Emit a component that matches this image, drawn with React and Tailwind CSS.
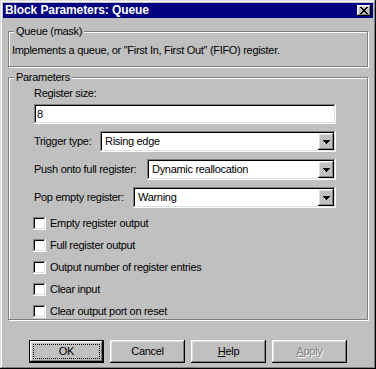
import React from 'react';

const raised = 'shadow-[inset_-1px_-1px_#000,inset_1px_1px_#fff,inset_-2px_-2px_#808080,inset_2px_2px_#dfdfdf]';
const sunken = 'shadow-[inset_-1px_-1px_#fff,inset_1px_1px_#808080,inset_-2px_-2px_#dfdfdf,inset_2px_2px_#000]';
const etched = 'border border-[#808080] shadow-[1px_1px_0_#fff,inset_1px_1px_0_#fff]';

const CloseGlyph = () => (
  <svg width="8" height="7" viewBox="0 0 8 7" shapeRendering="crispEdges">
    <path
      fill="#000"
      d="M0 0h2v1H0zM6 0h2v1H6zM1 1h2v1H1zM5 1h2v1H5zM2 2h4v1H2zM3 3h2v1H3zM2 4h4v1H2zM1 5h2v1H1zM5 5h2v1H5zM0 6h2v1H0zM6 6h2v1H6z"
    />
  </svg>
);

const ArrowGlyph = () => (
  <svg width="7" height="4" viewBox="0 0 7 4" shapeRendering="crispEdges">
    <path fill="#000" d="M0 0h7v1H0zM1 1h5v1H1zM2 2h3v1H2zM3 3h1v1H3z" />
  </svg>
);

const Dropdown = ({ value, width }) => (
  <div className={`flex h-[21px] items-center bg-white p-[2px] ${sunken} ${width}`}>
    <span className="flex-1 pl-[3px] leading-[13px]">{value}</span>
    <span className={`flex h-[17px] w-[16px] items-center justify-center bg-[#c0c0c0] ${raised}`}>
      <ArrowGlyph />
    </span>
  </div>
);

const Checkbox = ({ label }) => (
  <div className="ml-[-1px] mt-[9px] flex h-[13px] items-center gap-[4px]">
    <span className={`h-[13px] w-[13px] shrink-0 bg-white ${sunken}`} />
    <span className="leading-[13px]">{label}</span>
  </div>
);

const DialogButton = ({ children, isDefault, disabled }) => (
  <button
    className={`flex h-[23px] w-[75px] items-center justify-center bg-[#c0c0c0] ${raised} ${
      isDefault ? 'border border-black' : ''
    } ${disabled ? 'text-[#808080] [text-shadow:1px_1px_0_#fff]' : 'text-black'}`}
  >
    {isDefault ? (
      <span className="flex h-[15px] w-[67px] items-center justify-center border border-dotted border-black leading-[13px]">
        {children}
      </span>
    ) : (
      <span className="leading-[13px]">{children}</span>
    )}
  </button>
);

const App = () => {
  const checks = [
    'Empty register output',
    'Full register output',
    'Output number of register entries',
    'Clear input',
    'Clear output port on reset'
  ];

  return (
    <div className="h-[369px] w-[376px] overflow-hidden bg-white">
      <div
        className={`flex h-[369px] w-[376px] flex-col bg-[#c0c0c0] p-[3px] font-['Liberation_Sans',Arial,sans-serif] text-[11px] tracking-[-0.3px] text-black shadow-[inset_-1px_-1px_#000,inset_1px_1px_#dfdfdf,inset_-2px_-2px_#808080,inset_2px_2px_#fff]`}
      >
        {/* title bar */}
        <div className="flex h-[15px] items-center justify-between bg-[#000080] pl-[2px] pr-[2px]">
          <span className="text-[12px] font-bold leading-[15px] tracking-[-0.1px] text-white">
            Block Parameters: Queue
          </span>
          <span className={`flex h-[11px] w-[14px] items-center justify-center bg-[#c0c0c0] ${raised}`}>
            <CloseGlyph />
          </span>
        </div>

        <div className="flex flex-col px-[5px]">
          {/* mask description */}
          <div className={`relative mt-[13px] h-[36px] pl-[3px] pt-[12px] ${etched}`}>
            <span className="absolute left-[5px] top-[-7px] bg-[#c0c0c0] px-[2px] leading-[13px]">
              Queue (mask)
            </span>
            <p className="leading-[13px]">
              Implements a queue, or "First In, First Out" (FIFO) register.
            </p>
          </div>

          {/* parameters */}
          <div className={`relative mt-[10px] flex flex-col pb-[1px] pl-[25px] pr-[31px] pt-[9px] ${etched}`}>
            <span className="absolute left-[5px] top-[-7px] bg-[#c0c0c0] px-[2px] leading-[13px]">
              Parameters
            </span>

            <div className="h-[13px] leading-[13px]">Register size:</div>
            <div className={`mt-[4px] flex h-[20px] items-center bg-white pl-[3px] ${sunken}`}>
              <span className="leading-[13px]">8</span>
            </div>

            <div className="mt-[7px] flex items-center justify-between">
              <span className="leading-[13px]">Trigger type:</span>
              <Dropdown value="Rising edge" width="w-[236px]" />
            </div>
            <div className="mt-[7px] flex items-center justify-between">
              <span className="leading-[13px]">Push onto full register:</span>
              <Dropdown value="Dynamic reallocation" width="w-[189px]" />
            </div>
            <div className="mt-[7px] flex items-center justify-between">
              <span className="leading-[13px]">Pop empty register:</span>
              <Dropdown value="Warning" width="w-[203px]" />
            </div>

            {checks.map((label) => (
              <Checkbox key={label} label={label} />
            ))}
          </div>

          {/* buttons */}
          <div className="mt-[20px] flex justify-center gap-[6px]">
            <DialogButton isDefault>OK</DialogButton>
            <DialogButton>Cancel</DialogButton>
            <DialogButton>
              <u className="underline-offset-[1px]">H</u>elp
            </DialogButton>
            <DialogButton disabled>
              <u className="underline-offset-[1px]">A</u>pply
            </DialogButton>
          </div>
        </div>
      </div>
    </div>
  );
};

export default App;
